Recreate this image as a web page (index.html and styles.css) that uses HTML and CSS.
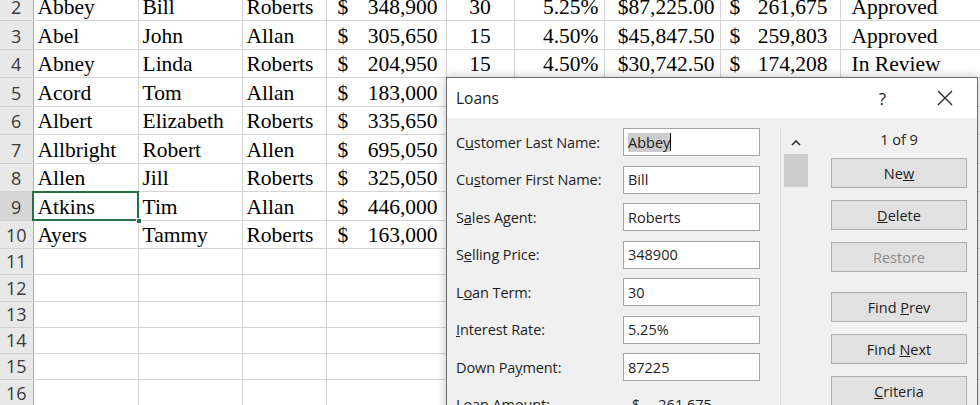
FILE: index.html
```html
<!DOCTYPE html>
<html lang="en">
<head>
    <meta charset="UTF-8">
    <title>Loans - Data Form</title>
    <link rel="stylesheet" href="styles.css">
</head>
<body>
    <div class="sheet">
        <table class="grid">
            <colgroup>
                <col class="c-head">
                <col class="c-a">
                <col class="c-b">
                <col class="c-c">
                <col class="c-d">
                <col class="c-e">
                <col class="c-f">
                <col class="c-g">
                <col class="c-h">
                <col class="c-i">
            </colgroup>
            <tbody>
                <tr class="row-data">
                    <th>2</th><td>Abbey</td><td>Bill</td><td>Roberts</td>
                    <td class="money"><span>$</span><span>348,900</span></td>
                    <td class="center">30</td><td class="right">5.25%</td><td class="right">$87,225.00</td>
                    <td class="money wide"><span>$</span><span>261,675</span></td><td class="status">Approved</td>
                </tr>
                <tr class="row-data">
                    <th>3</th><td>Abel</td><td>John</td><td>Allan</td>
                    <td class="money"><span>$</span><span>305,650</span></td>
                    <td class="center">15</td><td class="right">4.50%</td><td class="right">$45,847.50</td>
                    <td class="money wide"><span>$</span><span>259,803</span></td><td class="status">Approved</td>
                </tr>
                <tr class="row-data">
                    <th>4</th><td>Abney</td><td>Linda</td><td>Roberts</td>
                    <td class="money"><span>$</span><span>204,950</span></td>
                    <td class="center">15</td><td class="right">4.50%</td><td class="right">$30,742.50</td>
                    <td class="money wide"><span>$</span><span>174,208</span></td><td class="status">In Review</td>
                </tr>
                <tr class="row-data">
                    <th>5</th><td>Acord</td><td>Tom</td><td>Allan</td>
                    <td class="money"><span>$</span><span>183,000</span></td>
                    <td></td><td></td><td></td><td></td><td></td>
                </tr>
                <tr class="row-data">
                    <th>6</th><td>Albert</td><td>Elizabeth</td><td>Roberts</td>
                    <td class="money"><span>$</span><span>335,650</span></td>
                    <td></td><td></td><td></td><td></td><td></td>
                </tr>
                <tr class="row-data">
                    <th>7</th><td>Allbright</td><td>Robert</td><td>Allen</td>
                    <td class="money"><span>$</span><span>695,050</span></td>
                    <td></td><td></td><td></td><td></td><td></td>
                </tr>
                <tr class="row-data">
                    <th>8</th><td>Allen</td><td>Jill</td><td>Roberts</td>
                    <td class="money"><span>$</span><span>325,050</span></td>
                    <td></td><td></td><td></td><td></td><td></td>
                </tr>
                <tr class="row-data">
                    <th class="active">9</th><td class="selected">Atkins<span class="handle"></span></td><td>Tim</td><td>Allan</td>
                    <td class="money"><span>$</span><span>446,000</span></td>
                    <td></td><td></td><td></td><td></td><td></td>
                </tr>
                <tr class="row-data">
                    <th>10</th><td>Ayers</td><td>Tammy</td><td>Roberts</td>
                    <td class="money"><span>$</span><span>163,000</span></td>
                    <td></td><td></td><td></td><td></td><td></td>
                </tr>
                <tr class="row-empty"><th>11</th><td></td><td></td><td></td><td></td><td></td><td></td><td></td><td></td><td></td></tr>
                <tr class="row-empty"><th>12</th><td></td><td></td><td></td><td></td><td></td><td></td><td></td><td></td><td></td></tr>
                <tr class="row-empty"><th>13</th><td></td><td></td><td></td><td></td><td></td><td></td><td></td><td></td><td></td></tr>
                <tr class="row-empty"><th>14</th><td></td><td></td><td></td><td></td><td></td><td></td><td></td><td></td><td></td></tr>
                <tr class="row-empty"><th>15</th><td></td><td></td><td></td><td></td><td></td><td></td><td></td><td></td><td></td></tr>
                <tr class="row-empty"><th>16</th><td></td><td></td><td></td><td></td><td></td><td></td><td></td><td></td><td></td></tr>
            </tbody>
        </table>
    </div>

    <div class="dialog">
        <div class="title-bar">
            <span class="title">Loans</span>
            <div class="title-buttons">
                <span class="help">?</span>
                <svg class="close" width="16" height="16" viewBox="0 0 16 16">
                    <path d="M1 1 L15 15 M15 1 L1 15" stroke="#222" stroke-width="1.3" fill="none"/>
                </svg>
            </div>
        </div>
        <div class="dialog-body">
            <div class="form">
                <label>C<u>u</u>stomer Last Name:</label>
                <div class="field"><span class="sel">Abbey</span><span class="caret"></span></div>
                <label>Cu<u>s</u>tomer First Name:</label>
                <div class="field">Bill</div>
                <label>S<u>a</u>les Agent:</label>
                <div class="field">Roberts</div>
                <label>S<u>e</u>lling Price:</label>
                <div class="field">348900</div>
                <label>L<u>o</u>an Term:</label>
                <div class="field">30</div>
                <label><u>I</u>nterest Rate:</label>
                <div class="field">5.25%</div>
                <label>Down Pa<u>y</u>ment:</label>
                <div class="field">87225</div>
                <label>Loan Amount:</label>
                <div class="value"><span>$</span><span>261,675</span></div>
            </div>
            <div class="scrollbar">
                <svg class="arrow-up" width="10" height="7" viewBox="0 0 10 7">
                    <path d="M1 6 L5 2 L9 6" stroke="#333" stroke-width="1.6" fill="none"/>
                </svg>
                <div class="thumb"></div>
            </div>
            <div class="actions">
                <div class="record">1 of 9</div>
                <button>Ne<u>w</u></button>
                <button><u>D</u>elete</button>
                <button class="disabled">Restore</button>
                <button class="spaced">Find <u>P</u>rev</button>
                <button>Find <u>N</u>ext</button>
                <button><u>C</u>riteria</button>
            </div>
        </div>
    </div>
</body>
</html>
```

FILE: styles.css
```css
* {
    margin: 0;
    padding: 0;
    box-sizing: border-box;
}

body {
    width: 980px;
    height: 405px;
    overflow: hidden;
    background-color: #FFFFFF;
    position: relative;
}

/* spreadsheet */

.sheet {
    margin-top: -8px;
}

.grid {
    border-collapse: collapse;
    table-layout: fixed;
    width: 1000px;
    font-family: "Liberation Serif", "Times New Roman", serif;
    font-size: 21.5px;
    color: #000000;
}

.c-head { width: 33px; }
.c-a { width: 105px; }
.c-b { width: 104px; }
.c-c { width: 84px; }
.c-d { width: 120px; }
.c-e { width: 68px; }
.c-f { width: 90px; }
.c-g { width: 116px; }
.c-h { width: 120px; }
.c-i { width: 160px; }

.grid td {
    border-right: 1px solid #D4D4D4;
    border-bottom: 1px solid #D4D4D4;
    padding: 0 4px 1px 4px;
    line-height: 24px;
    vertical-align: bottom;
    white-space: nowrap;
    overflow: hidden;
}

.grid th {
    background-color: #E8E8E8;
    border-right: 1px solid #ABABAB;
    border-bottom: 1px solid #D0D0D0;
    font-family: "Open Sans", "Noto Sans", sans-serif;
    font-weight: 400;
    font-size: 18px;
    color: #3A3A3A;
    text-align: center;
    vertical-align: bottom;
    line-height: 24px;
    padding: 0 0 1px 0;
}

.grid th.active {
    background-color: #D6D6D6;
}

.row-data { height: 28.5px; }
.row-empty { height: 26.3px; }

.grid td.center { text-align: center; }
.grid td.right { text-align: right; padding-right: 5px; }
.grid td.status { padding-left: 11px; }

.grid td.money span:first-child {
    float: left;
    padding-left: 7px;
}

.grid td.money span:last-child {
    float: right;
    padding-right: 4px;
}

.grid td.money.wide span:first-child { padding-left: 5px; }
.grid td.money.wide span:last-child { padding-right: 8px; }

.grid td.selected {
    position: relative;
    overflow: visible;
    outline: 2px solid #217346;
    outline-offset: -1px;
}

.handle {
    position: absolute;
    right: -4px;
    bottom: -4px;
    width: 6px;
    height: 6px;
    background-color: #217346;
    border: 1px solid #FFFFFF;
}

/* data form dialog */

.dialog {
    position: absolute;
    left: 446px;
    top: 77px;
    width: 532px;
    height: 360px;
    background-color: #F0F0F0;
    border: 1px solid #6E6E6E;
    box-shadow: 0 0 10px rgba(0, 0, 0, 0.25);
    font-family: "Open Sans", "Noto Sans", sans-serif;
    font-size: 14.5px;
    color: #1E1E1E;
}

.title-bar {
    height: 40px;
    background-color: #FFFFFF;
    display: flex;
    justify-content: space-between;
    align-items: center;
    padding: 0 24px 0 9px;
}

.title {
    font-size: 15.5px;
}

.title-buttons {
    display: flex;
    align-items: center;
    gap: 51px;
}

.help {
    font-size: 17px;
}

.dialog-body {
    display: flex;
    align-items: flex-start;
    padding-top: 10px;
}

.form {
    width: 333px;
    padding-left: 9px;
    display: grid;
    grid-template-columns: 167px 137px;
    row-gap: 9.5px;
    align-items: center;
    align-content: start;
}

.form label {
    white-space: nowrap;
    letter-spacing: -0.1px;
}

.field {
    height: 28px;
    background-color: #FFFFFF;
    border: 1px solid #A5A5A5;
    padding: 0 4px;
    display: flex;
    align-items: center;
}

.sel {
    background-color: #CCCCCC;
}

.caret {
    width: 1px;
    height: 18px;
    background-color: #000000;
}

.value {
    height: 28px;
    display: flex;
    align-items: center;
    gap: 18px;
    padding-left: 9px;
}

.scrollbar {
    width: 28px;
    height: 360px;
    border-left: 1px solid #DCDCDC;
    display: flex;
    flex-direction: column;
    align-items: center;
    padding-top: 11px;
}

.arrow-up {
    margin-left: 2px;
}

.thumb {
    width: 24px;
    height: 33px;
    margin-top: 8px;
    margin-left: 2px;
    background-color: #CDCDCD;
}

.actions {
    width: 136px;
    margin-left: 23px;
    display: flex;
    flex-direction: column;
    padding-top: 1px;
}

.record {
    height: 22px;
    text-align: center;
    line-height: 22px;
    margin-bottom: 7px;
}

.actions button {
    height: 30px;
    margin-bottom: 12px;
    background-color: #E1E1E1;
    border: 1px solid #ADADAD;
    font-family: "Open Sans", "Noto Sans", sans-serif;
    font-size: 14.5px;
    color: #1E1E1E;
}

.actions button.disabled {
    color: #8A8A8A;
}

.actions button.spaced {
    margin-top: 8px;
}
```
